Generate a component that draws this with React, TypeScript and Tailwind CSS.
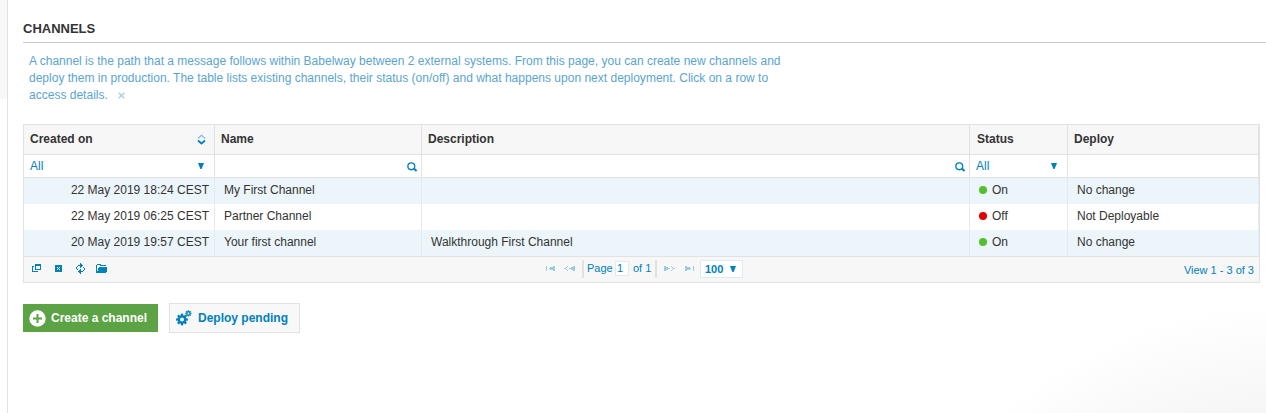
import type { ReactNode } from "react";

const COLS = ["w-[191px]", "w-[207px]", "w-[548px]", "w-[98px]", "w-[191px]"];

type Channel = { created: string; name: string; description: string; on: boolean; deploy: string };

const CHANNELS: Channel[] = [
  { created: "22 May 2019 18:24 CEST", name: "My First Channel", description: "", on: true, deploy: "No change" },
  { created: "22 May 2019 06:25 CEST", name: "Partner Channel", description: "", on: false, deploy: "Not Deployable" },
  { created: "20 May 2019 19:57 CEST", name: "Your first channel", description: "Walkthrough First Channel", on: true, deploy: "No change" },
];

function Pixels({ w, h, d, className = "" }: { w: number; h: number; d: string; className?: string }) {
  return (
    <svg width={w} height={h} viewBox={`0 0 ${w} ${h}`} shapeRendering="crispEdges" fill="currentColor" className={`block shrink-0 ${className}`}>
      <path d={d} fillRule="evenodd" />
    </svg>
  );
}

function Caret({ className = "" }: { className?: string }) {
  return (
    <svg width="6" height="6" viewBox="0 0 6 6" fill="currentColor" className={`block shrink-0 ${className}`}>
      <path d="M0 0H6L3.6 6H2.4Z" />
    </svg>
  );
}

function SearchIcon() {
  return (
    <svg width="11" height="10" viewBox="0 0 11 10" fill="none" stroke="currentColor" className="block shrink-0">
      <circle cx="4.3" cy="4.3" r="3.4" strokeWidth="1.4" />
      <path d="M6.8 6.6L9.6 9" strokeWidth="2" />
    </svg>
  );
}

function SortIcon() {
  return (
    <svg width="9" height="11" viewBox="0 0 9 11" fill="none" className="block shrink-0">
      <path d="M1 4.5L4.5 1.2L8 4.5" stroke="#8cc4de" strokeWidth="1.4" />
      <path d="M1 6.5L4.5 9.5L8 6.5" stroke="#0081bb" strokeWidth="1.8" />
    </svg>
  );
}

function Gear({ cx, cy, r, hole, tooth }: { cx: number; cy: number; r: number; hole: number; tooth: number }) {
  return (
    <g transform={`translate(${cx} ${cy})`}>
      <circle r={(r + hole) / 2} fill="none" stroke="currentColor" strokeWidth={r - hole} />
      {[0, 45, 90, 135, 180, 225, 270, 315].map((a) => (
        <rect key={a} x={-tooth / 2} y={-r - tooth * 0.65} width={tooth} height={tooth} transform={`rotate(${a})`} fill="currentColor" />
      ))}
    </g>
  );
}

function Cell({ col, className, children }: { col: number; className: string; children?: ReactNode }) {
  return <div className={`flex h-full shrink-0 border-r ${COLS[col]} ${className}`}>{children}</div>;
}

function FilterRow() {
  const cell = "border-[#e2e2e2] items-center";
  return (
    <div className="box-content flex h-[22px] border-b border-[#e2e2e2] bg-white text-[#0081bb]">
      <Cell col={0} className={`${cell} justify-between pl-1.5 pr-[10px]`}>
        <span className="pt-px">All</span>
        <Caret />
      </Cell>
      <Cell col={1} className={`${cell} justify-end pr-[3px] pt-[2px]`}><SearchIcon /></Cell>
      <Cell col={2} className={`${cell} justify-end pr-[3px] pt-[2px]`}><SearchIcon /></Cell>
      <Cell col={3} className={`${cell} justify-between pl-1.5 pr-[10px]`}>
        <span className="pt-px">All</span>
        <Caret />
      </Cell>
      <Cell col={4} className={cell} />
    </div>
  );
}

function Row({ row, shaded }: { row: Channel; shaded: boolean }) {
  const cell = "border-[#e1ebf1] items-center pb-[2px]";
  return (
    <div className={`flex h-[26px] text-[#333] ${shaded ? "bg-[#ecf5f9]" : "bg-white"}`}>
      <Cell col={0} className={`${cell} justify-end pr-[5px]`}>{row.created}</Cell>
      <Cell col={1} className={`${cell} pl-[9px]`}>{row.name}</Cell>
      <Cell col={2} className={`${cell} pl-[9px]`}>{row.description}</Cell>
      <Cell col={3} className={`${cell} pl-[9px]`}>
        <span className={`mr-[5px] size-2 rounded-full ${row.on ? "bg-[#55c02f]" : "bg-[#e60000]"}`} />
        {row.on ? "On" : "Off"}
      </Cell>
      <Cell col={4} className={`${cell} pl-[9px]`}>{row.deploy}</Cell>
    </div>
  );
}

function Footer() {
  return (
    <div className="flex h-[25px] bg-[#f7f7f7] text-[11px] leading-[14px] text-[#0081bb]">
      <div className="flex w-[521px] shrink-0 items-start pl-2 pt-[6px]">
        <Pixels w={9} h={8} className="mt-px" d="M3 0H9V6H3ZM4 2V5H8V2ZM0 2H2V3H1V7H6V8H0Z" />
        <Pixels w={7} h={7} className="ml-[14px] mt-[2px]" d="M0 0H7V7H0ZM2 2V3H3V2ZM4 2V3H5V2ZM3 3V4H4V3ZM2 4V5H3V4ZM4 4V5H5V4Z" />
        <Pixels
          w={9}
          h={11}
          className="ml-[14px]"
          d="M4 0H5V1H6V2H7V3H6V4H5V5H4V3H2V2H4ZM1 3H2V4H1ZM0 4H1V6H0ZM1 6H2V7H1ZM7 4H8V5H7ZM8 5H9V7H8ZM7 7H8V8H7ZM4 6H5V8H7V9H5V11H4V10H3V9H2V8H3V7H4Z"
        />
        <Pixels w={11} h={9} className="ml-[11px] mt-px" d="M1 0H5V1H10V2H4V1H1V9H0V1H1ZM3 3H11V8H10V9H1V7H2V4H3Z" />
      </div>
      <div className="flex w-[200px] shrink-0 items-start">
        <div className="flex pt-[9px] text-[#9bcbe0]">
          <Pixels w={9} h={5} className="ml-px" d="M0 0H1V5H0ZM7 0H9V5H7V4H4V3H3V2H4V1H7Z" />
          <Pixels w={11} h={5} className="ml-[9px]" d="M3 0H4V1H3V2H2V3H3V4H4V5H3V4H2V3H0V2H2V1H3ZM9 0H11V5H9V4H7V3H5V2H7V1H9Z" />
        </div>
        <span className="ml-[7px] mt-[3px] h-[18px] w-[2px] bg-[#e2e2e2]" />
        <span className="ml-[3px] mt-[4px] w-[25px]">Page</span>
        <span className="ml-[3px] mt-[4px] h-[15px] w-[14px] border border-[#dcebf4] bg-white pl-px leading-[13px]">1</span>
        <span className="ml-[4px] mt-[4px] w-[18px] whitespace-nowrap">of 1</span>
        <span className="ml-[4px] mt-[3px] h-[18px] w-[2px] bg-[#e2e2e2]" />
        <div className="flex pt-[9px] text-[#9bcbe0]">
          <Pixels w={11} h={5} className="ml-[7px]" d="M0 0H2V1H4V2H6V3H4V4H2V5H0ZM7 0H8V1H9V2H11V3H9V4H8V5H7V4H8V3H9V2H8V1H7Z" />
          <Pixels w={9} h={5} className="ml-[10px]" d="M0 0H2V1H5V2H6V3H5V4H2V5H0ZM8 0H9V5H8Z" />
        </div>
        <span className="ml-[6px] mt-[3px] flex h-[18px] w-[43px] shrink-0 items-center border border-[#dcebf4] bg-white pl-1 font-bold">
          100<Caret className="ml-[7px]" />
        </span>
      </div>
      <span className="ml-auto mr-[5px] mt-[6px]">View 1 - 3 of 3</span>
    </div>
  );
}

export default function App() {
  return (
    <div className="flex h-[413px] w-[1266px] overflow-hidden bg-white bg-[radial-gradient(circle_at_1290px_742px,#f6f6f6_330px,#ffffff_440px)] font-['Liberation_Sans',Arial,sans-serif] text-[12px] leading-[17px]">
      <div className="h-full w-2 shrink-0 border-r border-[#e2e2e2] bg-white">
        <div className="h-[99px] bg-[#f8f8f8]" />
      </div>
      <main className="w-[1258px] pl-[15px]">
        <h1 className="h-[43px] border-b border-[#ccc] pt-5 text-[13px] font-bold leading-[17px] text-[#333]">CHANNELS</h1>
        <p className="w-[765px] whitespace-nowrap pl-1.5 pt-[10px] tracking-[0.008px] text-[#5ba4d1]">
          A channel is the path that a message follows within Babelway between 2 external systems. From this page, you can create new channels and
          <br />
          deploy them in production. The table lists existing channels, their status (on/off) and what happens upon next deployment. Click on a row to
          <br />
          access details.
          <svg width="7" height="7" viewBox="0 0 7 7" className="ml-[10px] inline-block align-[0px]" stroke="#a9cfe6" strokeWidth="1.4">
            <path d="M.7.7L6.3 6.3M6.3.7L.7 6.3" />
          </svg>
        </p>
        <section className="mt-[20px] w-[1237px] border border-[#e2e2e2]">
          <div className="flex h-[30px] border-b border-[#e2e2e2] bg-[#f7f7f7] font-bold text-[#333]">
            {["Created on", "Name", "Description", "Status", "Deploy"].map((label, i) => (
              <Cell key={label} col={i} className={`items-center justify-between border-[#e2e2e2] pr-2 ${i === 3 ? "pl-[7px]" : "pl-1.5"}`}>
                {label}
                {i === 0 && <SortIcon />}
              </Cell>
            ))}
          </div>
          <FilterRow />
          {CHANNELS.map((row, i) => (
            <Row key={row.created} row={row} shaded={i % 2 === 0} />
          ))}
          <div className="h-px bg-[#e2e2e2]" />
          <Footer />
        </section>
        <div className="mt-5 flex items-center gap-[11px] font-bold">
          <button className="flex h-7 w-[135px] items-center bg-[#5ba344] pl-1.5 text-white">
            <svg width="17" height="17" viewBox="0 0 17 17" className="mr-[5px] mt-px block">
              <circle cx="8.5" cy="8.5" r="8.2" fill="#fff" />
              <path d="M8.5 4V13M4 8.5H13" stroke="#5ba344" strokeWidth="2" />
            </svg>
            Create a channel
          </button>
          <button className="flex h-[30px] w-[131px] items-center border border-[#e2e2e2] bg-[#f8f8f8] pl-1.5 text-[#0081bb]">
            <svg width="16" height="16" viewBox="0 0 16 16" className="mr-[6px] block">
              <Gear cx={6} cy={9.5} r={4.3} hole={2} tooth={2.4} />
              <Gear cx={12.4} cy={3.4} r={2.3} hole={1} tooth={1.3} />
            </svg>
            Deploy pending
          </button>
        </div>
      </main>
    </div>
  );
}
